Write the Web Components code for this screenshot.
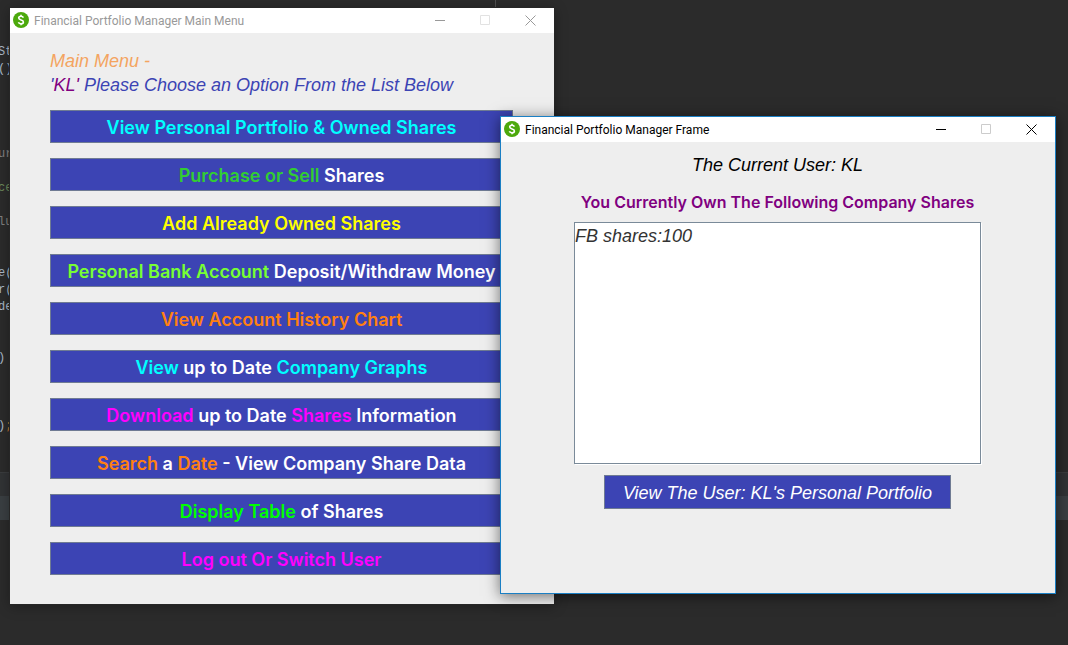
<!DOCTYPE html>
<html lang="en">
<head>
<meta charset="utf-8">
<title>Financial Portfolio Manager</title>
<style>
  html, body { margin: 0; background: #2b2b2b; }
</style>
</head>
<body>
<portfolio-desktop></portfolio-desktop>

<template id="desktop-tpl">
  <style>
    :host { display: block; position: relative; min-height: 100vh; overflow: hidden; background: #2b2b2b; }
    app-window { position: absolute; }
    .menu { left: 10px; top: 8px; right: 514px; min-width: 480px; --shadow: 0 2px 12px rgba(0,0,0,.35); --edge: 0 0 0 1px #262626; }
    .frame { left: 500px; top: 116px; right: 12px; min-width: 440px; --shadow: 0 2px 14px rgba(0,0,0,.55); --title: #000; --edge: inset 0 0 0 0 #000; --rim: 1px solid #1a7fc4; --box: #ccc; }
  </style>
  <code-editor></code-editor>
  <app-window class="menu" heading="Financial Portfolio Manager Main Menu"><main-menu></main-menu></app-window>
  <app-window class="frame" heading="Financial Portfolio Manager Frame"><share-list></share-list></app-window>
</template>

<template id="editor-tpl">
  <style>
    :host { display: flex; flex-direction: column; min-height: 100vh; }
    .code { padding: 10px 0 3px; position: relative; }
    pre { margin: 0 0 0 -2px; font: 12px/17px "Liberation Mono", monospace; color: #a9b7c6; }
    .g { color: #6a8759; } .o { color: #cc7832; } .d { color: #808080; }
    .margin { position: absolute; left: 495px; top: 0; width: 1px; height: 100%; background: #505050; clip-path: inset(0 0 75% 0); }
    .split { height: 24px; background: #313335; box-shadow: inset 0 1px #3a3c3e; }
    .tabs { height: 24px; background: #3a3f42; }
  </style>
  <div class="code"><pre>


St
()




<span class="d">ur</span>

<span class="g">ce</span>

<span class="d">lu</span>


e(
r(
de


)



)<span class="o">;</span>


</pre><div class="margin"></div></div>
  <div class="split"></div>
  <div class="tabs"></div>
</template>

<template id="window-tpl">
  <style>
    :host { display: block; box-sizing: border-box; background: #eee; border: var(--rim, none); box-shadow: var(--edge), var(--shadow); }
    header { display: flex; align-items: center; height: 25px; padding-left: 3px; background: #fff; color: var(--title, #999); }
    .logo { width: 16px; height: 16px; margin: 0 5px 1px 0; flex: none; }
    h1 { flex: 1; margin: 0; font: 12px/24px Roboto, "Open Sans", sans-serif; white-space: nowrap; }
    button { display: grid; place-items: center; width: 45px; height: 25px; padding: 0 2px 0 0; border: 0; background: none; color: inherit; }
    button svg { width: 11px; height: 11px; fill: none; stroke: currentColor; }
    .max { color: var(--box, #e2e2e2); }
  </style>
  <header>
    <svg class="logo" viewBox="0 0 16 16" aria-hidden="true"><circle cx="8" cy="8" r="8" fill="#4ca90c"/><path d="M10.400 5.600C10 4.700 9.100 4.300 8 4.300 6.600 4.300 5.700 5 5.700 6c0 2.500 4.700 1.300 4.700 3.900 0 1.100-1 1.800-2.400 1.800-1.200 0-2.200-.5-2.600-1.500M8 2.800v1.500M8 11.700v1.500" fill="none" stroke="#fff" stroke-width="1.600"/></svg>
    <h1></h1>
    <button aria-label="Minimize"><svg viewBox="0 0 11 11"><path d="M0 5.500h10"/></svg></button>
    <button class="max" aria-label="Maximize"><svg viewBox="0 0 11 11"><path d="M.5.500h9v9h-9z"/></svg></button>
    <button aria-label="Close"><svg viewBox="0 0 11 11"><path d="M.5.500l10 10M10.500.500l-10 10"/></svg></button>
  </header>
  <slot></slot>
</template>

<template id="menu-tpl">
  <style>
    :host { display: block; padding: 16px 41px 29px 40px; }
    h2 { margin: 0 0 13px; font: italic 18px/24px "Liberation Sans", Arial, sans-serif; color: #3c44b4; white-space: nowrap; }
    .hi { color: #f4a460; } .user { color: #800080; }
    nav { display: grid; gap: 15px; }
    .cyan { color: #0ff; } .green { color: #32cd32; } .yellow { color: #ff0; } .lime { color: #7f3; }
    .orange { color: #ff8010; } .pink { color: #f0f; } .bright { color: #0f0; }
  </style>
  <h2><span class="hi">Main Menu -</span><br>'<span class="user">KL'</span> Please Choose an Option From the List Below</h2>
  <nav>
    <menu-button><span class="cyan">View Personal Portfolio &amp; Owned Shares</span></menu-button>
    <menu-button><span class="green">Purchase or Sell</span> Shares</menu-button>
    <menu-button><span class="yellow">Add Already Owned Shares</span></menu-button>
    <menu-button><span class="lime">Personal Bank Account</span> Deposit/Withdraw Money</menu-button>
    <menu-button><span class="orange">View Account History Chart</span></menu-button>
    <menu-button><span class="cyan">View</span> up to Date <span class="cyan">Company Graphs</span></menu-button>
    <menu-button><span class="pink">Download</span> up to Date <span class="pink">Shares</span> Information</menu-button>
    <menu-button><span class="orange">Search</span> a <span class="orange">Date</span> - View Company Share Data</menu-button>
    <menu-button><span class="bright">Display Table</span> of Shares</menu-button>
    <menu-button><span class="pink">Log out Or Switch User</span></menu-button>
  </nav>
</template>

<template id="button-tpl">
  <style>
    :host { display: block; }
    button { display: block; width: 100%; padding: var(--pad, 5px 0 2px); border: 1px solid #6f7b93; background: #3c44b4; color: #fff; font: var(--face, 600 18px/24px "Century Gothic", Inter, sans-serif); white-space: nowrap; text-align: center; }
  </style>
  <button type="button"><slot></slot></button>
</template>

<template id="shares-tpl">
  <style>
    :host { display: flex; flex-direction: column; align-items: center; padding: 11px 74px 84px 73px; }
    p { margin: 0; font: italic 18px/24px "Liberation Sans", Arial, sans-serif; color: #000; }
    label { margin: 13px 0 7px; font: 600 16px/25px "Century Gothic", Inter, sans-serif; color: #800080; white-space: nowrap; }
    textarea { box-sizing: border-box; width: 100%; height: 242px; margin: 0 0 11px; padding: 1px 0; border: 1px solid #7a8a99; box-shadow: 1px 1px #fff; border-radius: 0; background: #fff; color: #333; font: italic 18px/24px "Liberation Sans", Arial, sans-serif; resize: none; outline: 0; overflow: hidden; }
    menu-button { --face: italic 18px/24px "Liberation Sans", Arial, sans-serif; --pad: 5px 18px 3px; }
  </style>
  <p>The Current User: KL</p>
  <label for="owned">You Currently Own The Following Company Shares</label>
  <textarea id="owned" readonly>FB shares:100</textarea>
  <menu-button>View The User: KL's Personal Portfolio</menu-button>
</template>

<script>
  const define = (name, id, setup) => customElements.define(name, class extends HTMLElement {
    constructor() {
      super();
      this.attachShadow({ mode: "open" }).append(document.getElementById(id).content.cloneNode(true));
    }
    connectedCallback() { if (setup) setup(this); }
  });
  define("menu-button", "button-tpl");
  define("code-editor", "editor-tpl");
  define("main-menu", "menu-tpl");
  define("share-list", "shares-tpl");
  define("app-window", "window-tpl", el => {
    el.shadowRoot.querySelector("h1").textContent = el.getAttribute("heading");
  });
  define("portfolio-desktop", "desktop-tpl");
</script>
</body>
</html>
